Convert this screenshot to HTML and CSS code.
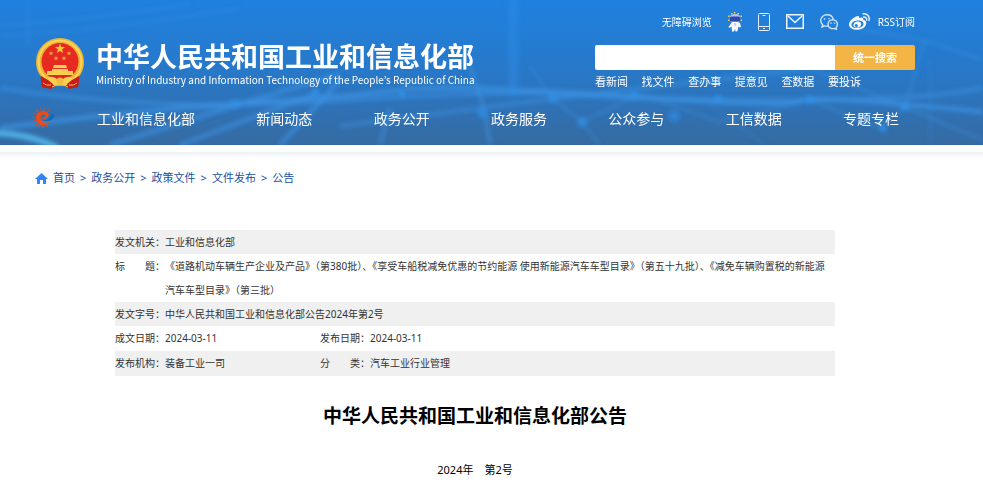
FILE: index.html
```
<!DOCTYPE html>
<html lang="zh-CN">
<head>
    <meta charset="UTF-8">
    <meta name="viewport" content="width=device-width, initial-scale=1.0">
    <title>中华人民共和国工业和信息化部公告</title>
    <link rel="stylesheet" href="styles.css">
</head>
<body>
<header class="header">
    <svg class="header-bg" viewBox="0 0 983 145" preserveAspectRatio="none" aria-hidden="true">
        <defs>
            <radialGradient id="dot">
                <stop offset="0" stop-color="#2f93ee" stop-opacity=".7"/>
                <stop offset="1" stop-color="#2f93ee" stop-opacity="0"/>
            </radialGradient>
            <filter id="soft" x="-10%" y="-50%" width="120%" height="200%"><feGaussianBlur stdDeviation="2"/></filter>
            <filter id="glow" filterUnits="userSpaceOnUse" x="480" y="-20" width="70" height="140"><feGaussianBlur stdDeviation="3"/></filter>
        </defs>
        <g fill="none" stroke="#3c93e4" filter="url(#soft)">
            <path stroke-width="5" opacity=".7" d="M0 128 Q120 112 235 104 T400 90 T620 96 T800 101 T983 112"/>
            <path stroke-width="4" opacity=".6" d="M0 88 Q150 112 330 101 T560 94 T760 100 T983 88"/>
            <path stroke-width="5" opacity=".6" d="M110 145 L240 104 L340 74 M180 145 L320 92 M280 145 L340 80"/>
            <path stroke-width="4" opacity=".5" d="M340 126 Q480 108 560 98 T800 70 M470 66 L485 112 L490 145 M380 145 L390 108"/>
            <path stroke-width="2" opacity=".5" d="M530 66 L553 98 L582 122 L600 145 M582 122 L640 94 L720 122 L810 100"/>
            <path stroke-width="2" opacity=".5" d="M810 100 L880 128 L905 107 L983 140 M905 107 L925 40 L983 60 M860 30 L925 40 M790 60 L905 107"/>
            <path stroke-width="3" opacity=".3" d="M0 26 Q90 20 190 4 M0 36 Q110 30 240 8 M28 0 V46"/>
            <path stroke-width="2" opacity=".3" d="M930 60 V145 M700 98 L765 145"/>
        </g>
        <path filter="url(#glow)" fill="none" stroke="#2f8fe8" stroke-width="9" opacity=".5" d="M513 -10 L513.500 96"/>
        <path filter="url(#soft)" fill="none" stroke="#55bdf2" stroke-width="6" opacity=".85" d="M-5 133 Q30 134 58 148"/>
        <g fill="url(#dot)">
            <circle cx="235" cy="104" r="8"/>
            <circle cx="315" cy="92" r="6"/>
            <circle cx="402" cy="94" r="6"/>
            <circle cx="482" cy="113" r="8"/>
            <circle cx="553" cy="98" r="8"/>
            <circle cx="582" cy="122" r="8"/>
            <circle cx="634" cy="95" r="7"/>
            <circle cx="674" cy="116" r="9"/>
            <circle cx="718" cy="99" r="7"/>
            <circle cx="810" cy="100" r="7"/>
            <circle cx="905" cy="107" r="7"/>
            <circle cx="883" cy="128" r="7"/>
        </g>
    </svg>

    <div class="header-main">
        <a class="brand" href="#">
            <svg class="emblem" viewBox="0 0 50 53" aria-hidden="true">
                <path fill="#cf1d1b" d="M5 35 L7 50 L16 51 L21 49 L29 49 L34 51 L43 50 L45 35Z"/>
                <circle cx="25" cy="25" r="24" fill="#eeb532"/>
                <circle cx="25" cy="25" r="21.5" fill="none" stroke="#fbd45a" stroke-width="2"/>
                <circle cx="25" cy="24.500" r="18.500" fill="#e62a22"/>
                <path fill="#f6c53a" d="M25 6.500l1.300 3.500 3.700.1-2.900 2.300 1 3.600-3.100-2.100-3.100 2.100 1-3.600-2.900-2.300 3.700-.1z"/>
                <g fill="#e9ab35">
                    <path d="M16 14l.7 1.500h1.700l-1.300 1.100.5 1.700-1.600-1-1.600 1 .5-1.700-1.300-1.100h1.700z"/>
                    <path d="M34 14l.7 1.500h1.700l-1.300 1.100.5 1.700-1.600-1-1.600 1 .5-1.700-1.300-1.100h1.700z"/>
                    <path d="M21 19l.7 1.500h1.700l-1.300 1.100.5 1.700-1.600-1-1.600 1 .5-1.700-1.300-1.100h1.700z"/>
                    <path d="M29 19l.7 1.500h1.700l-1.300 1.100.5 1.700-1.600-1-1.600 1 .5-1.700-1.300-1.100h1.700z"/>
                </g>
                <path fill="#fbcf52" d="M19 28h12l1 3h-14zM17 32h16v2h5v4H12v-4h5z"/>
                <path fill="#d92720" d="M14 39h22l-4 2H18z"/>
                <path fill="#fbcf52" d="M14 40q6-1 11 5 5-6 11-5l3 3-9 6q-5-3-10 0l-9-6z"/>
                <circle cx="25" cy="44" r="3.500" fill="#f6bd3c"/>
                <path fill="#c81c1a" d="M6 39l7 4 5 4-2 5-9-2zM44 39l-7 4-5 4 2 5 9-2z"/>
                <path fill="none" stroke="#f3c348" d="M8 46q3 3 8 2M42 46q-3 3-8 2M17 50q8-5 16 0"/>
            </svg>
            <span class="brand-text">
                <span class="brand-name">中华人民共和国工业和信息化部</span>
                <span class="brand-en" lang="en">Ministry of Industry and Information Technology of the People’s Republic of China</span>
            </span>
        </a>

        <div class="tools">
            <div class="tool-links">
                <a href="#">无障碍浏览</a>
                <a href="#" class="robot" aria-label="智能机器人">
                    <svg width="14" height="20" viewBox="0 0 14 20">
                        <ellipse cx="7" cy="6.500" rx="5.500" ry="4.500" fill="#a9c4f2"/>
                        <rect x="1.500" y="4.500" width="11" height="5" rx="2.500" fill="#3145b5"/>
                        <path fill="#e8d44e" d="M3 1h1.500v1.500H3zM6 0h1.500v1.500H6zM9.500 1H11v1.500H9.500zM0 3.500h1.500V5H0zM12.500 3.500H14V5h-1.500zM0 7.500h1.500V9H0zM12.500 7.500H14V9h-1.500zM5 2.500h1V4H5zM8.500 2.500h1V4h-1z"/>
                        <path fill="#f4f7fd" d="M4 10h6l2 1 1 4-2 .5-1-1v3l-1 2H7.500L7 17l-1 2.500H4l-.5-5-2 1.500-1-1z"/>
                        <path fill="#c5d6f2" d="M6 11h2v3H6z"/>
                    </svg>
                </a>
                <a href="#" class="phone" aria-label="手机版">
                    <svg width="12" height="18" viewBox="0 0 12 18" fill="none" stroke="#e2edf9">
                        <rect x=".5" y=".5" width="11" height="17" rx="1"/>
                        <path d="M0 13.500h12M4.500 2.500h3M5 15.500h2"/>
                    </svg>
                </a>
                <a href="#" class="mail" aria-label="邮箱">
                    <svg width="18" height="15" viewBox="0 0 18 15" fill="none" stroke="#f0f6fd" stroke-width="1.500">
                        <rect x=".75" y=".75" width="16.500" height="13.500"/>
                        <path d="M2 2l7 6.500L16 2"/>
                    </svg>
                </a>
                <a href="#" class="wechat" aria-label="微信">
                    <svg width="18" height="16" viewBox="0 0 18 16" fill="none" stroke="#cfe4f8" stroke-width="1.400">
                        <path d="M8 12q-2 .4-3.500-.2L2 13l.6-2.400Q.7 9 .7 6.500C.7 3.300 3.400.8 7 .8c3.200 0 5.700 2 6.200 4.700"/>
                        <path d="M16 13.700l.4 1.600-2-.9c-3.300.9-6.400-1-6.400-4 0-2.700 2-4.700 4.700-4.700s4.700 2 4.700 4.500c0 1.400-.5 2.600-1.400 3.500z"/>
                        <path d="M4.500 4.200v1.500M9 4v1.300M11 8.500v1.300M14.500 8.500v1.300"/>
                    </svg>
                </a>
                <a href="#" class="weibo" aria-label="微博">
                    <svg width="21" height="17" viewBox="0 0 21 17">
                        <path fill="#f3f8fe" fill-rule="evenodd" d="M7 3.500c2-1 3.500-.6 3 1.500 2.500-1 4.700-.6 4.300 1.700 2 .6 3.200 1.700 3 3.300C17 14 13 16.800 8.300 16.800 3.500 16.800 0 14.700 0 11.500c0-3 3.500-6.500 7-8zM8.500 7.500C5 7.700 2.300 9.500 2.500 12s3 3.300 6.200 3 6-2 5.800-4.300-2.800-3.400-6-3.200z"/>
                        <path fill="#f3f8fe" fill-rule="evenodd" d="M8.500 8.500c2.300-.2 4 1 3.800 2.900-.2 1.800-2 3.100-4.200 3.200-2.200 0-3.800-1-3.700-2.900.1-1.700 1.900-3.100 4.100-3.200zM7.200 11a1.500 1.500 0 1 0 .1 3 1.500 1.500 0 0 0 0-3z"/>
                        <path fill="none" stroke="#e4effb" stroke-width="1.500" d="M13.500 1q3.500-.8 5.500 1.600t.8 5.400M14 4q2-.4 3 .8t.5 2.900"/>
                    </svg>
                </a>
                <a href="#">RSS订阅</a>
            </div>
            <form class="search">
                <input type="text" class="search-input" aria-label="搜索">
                <button type="submit" class="search-button">统一搜索</button>
            </form>
            <div class="hot-links">
                <a href="#">看新闻</a>
                <a href="#">找文件</a>
                <a href="#">查办事</a>
                <a href="#">提意见</a>
                <a href="#">查数据</a>
                <a href="#">要投诉</a>
            </div>
        </div>
    </div>

    <nav class="nav">
        <svg class="nav-logo" width="22" height="20" viewBox="0 0 22 20" aria-hidden="true">
            <path fill="none" stroke="#e04a25" stroke-width="1.800" stroke-dasharray="1.500 2.300" d="M15.500 3.200A9 9 0 1 0 15.500 16.800"/>
            <path fill="#f04a16" d="M16 6.500Q14 2.500 9.500 2.800 3 3.500 2.800 10 3 16.500 9.500 17.200 14 17.200 16.500 14 11 16 8.500 13 6.500 10 8.500 7.500 11 5 12.500 7.500 12.500 9.500 8 11 13.500 12.500 16 6.500z"/>
            <path fill="#1268b8" d="M9.500 12.500Q17 12 18.500 5.500 22.500 7 20 10.500 16.500 14.500 9.500 12.500z"/>
        </svg>
        <div class="nav-links">
            <a href="#">工业和信息化部</a>
            <a href="#">新闻动态</a>
            <a href="#">政务公开</a>
            <a href="#">政务服务</a>
            <a href="#">公众参与</a>
            <a href="#">工信数据</a>
            <a href="#">专题专栏</a>
        </div>
    </nav>
</header>
<div class="header-shadow"></div>

<main class="content">
    <div class="breadcrumb">
        <svg width="13" height="11" viewBox="0 0 13 11" fill="#3385f0" aria-hidden="true">
            <path d="M6.500 0L13 6h-2v5H8V7H5v4H2V6H0z"/>
        </svg>
        <a href="#">首页</a>
        <span>&gt;</span>
        <a href="#">政务公开</a>
        <span>&gt;</span>
        <a href="#">政策文件</a>
        <span>&gt;</span>
        <a href="#">文件发布</a>
        <span>&gt;</span>
        <a href="#">公告</a>
    </div>

    <article class="article">
        <table class="info">
            <colgroup>
                <col class="col-label">
                <col class="col-date">
                <col class="col-label">
                <col>
            </colgroup>
            <tr class="shaded">
                <th scope="row">发文机关：</th>
                <td colspan="3">工业和信息化部</td>
            </tr>
            <tr>
                <th scope="row">标　　题：</th>
                <td colspan="3">《道路机动车辆生产企业及产品》（第380批）、《享受车船税减免优惠的节约能源 使用新能源汽车车型目录》（第五十九批）、《减免车辆购置税的新能源汽车车型目录》（第三批）</td>
            </tr>
            <tr class="shaded">
                <th scope="row">发文字号：</th>
                <td colspan="3">中华人民共和国工业和信息化部公告2024年第2号</td>
            </tr>
            <tr class="tall">
                <th scope="row">成文日期：</th>
                <td>2024-03-11</td>
                <th scope="row">发布日期：</th>
                <td>2024-03-11</td>
            </tr>
            <tr class="shaded tall">
                <th scope="row">发布机构：</th>
                <td>装备工业一司</td>
                <th scope="row">分　　类：</th>
                <td>汽车工业行业管理</td>
            </tr>
        </table>
        <h1>中华人民共和国工业和信息化部公告</h1>
        <p class="number">2024年　第2号</p>
    </article>
</main>
</body>
</html>
```
FILE: styles.css
```
* {
    box-sizing: border-box;
}

body {
    margin: 0;
    background-color: #fff;
    color: #333;
    font-family: "Noto Sans", "Noto Sans CJK SC", sans-serif;
    font-size: 10px;
}

a {
    color: inherit;
    text-decoration: none;
}

svg {
    display: block;
    flex: none;
}

.header {
    position: relative;
    padding: 0 68px 0 35px;
    background: linear-gradient(#1f81df, #2878c8 50%, #366ba2);
    color: #fff;
}

.header-bg {
    position: absolute;
    top: 0;
    left: 0;
    width: 100%;
    height: 100%;
}

.header-main {
    position: relative;
    display: flex;
    justify-content: space-between;
}

.brand {
    display: flex;
    gap: 11px;
    padding-top: 37px;
}

.emblem {
    width: 50px;
    height: 53px;
}

.brand-text {
    display: flex;
    flex-direction: column;
    padding-top: 5px;
    white-space: nowrap;
}

.brand-name {
    font-family: "Liberation Sans", "Noto Sans CJK SC", sans-serif;
    font-size: 27px;
    font-weight: bold;
    line-height: 32px;
}

.brand-en {
    font-family: "Noto Sans CJK KR", sans-serif;
    font-size: 10px;
    line-height: 12px;
}

.tools {
    width: 320px;
}

.tool-links {
    display: flex;
    align-items: center;
    justify-content: flex-end;
    height: 45px;
    padding-bottom: 2px;
    white-space: nowrap;
}

.robot {
    margin: 0 16px;
}

.mail {
    margin: 0 16px;
}

.weibo {
    margin: 0 8px 0 11px;
}

.search {
    display: flex;
    height: 25px;
}

.search-input {
    flex: 1;
    min-width: 0;
    padding: 0 8px;
    border: none;
    border-radius: 2px 0 0 2px;
    background-color: #fff;
    font-size: 11px;
}

.search-button {
    width: 80px;
    padding: 0 0 2px;
    border: none;
    border-radius: 0 2px 2px 0;
    background-color: #f3b545;
    color: #fff;
    font-family: inherit;
    font-size: 11px;
    font-weight: bold;
    cursor: pointer;
}

.hot-links {
    display: flex;
    justify-content: space-between;
    padding-right: 54px;
    font-size: 11px;
    line-height: 24px;
}

.nav {
    position: relative;
    display: flex;
    align-items: center;
    gap: 42px;
    height: 51px;
    padding: 0 16px 3px 0;
}

.nav-logo {
    margin-left: -2px;
}

.nav-links {
    display: flex;
    flex: 1;
    justify-content: space-between;
    font-size: 14px;
}

.header-shadow {
    height: 13px;
    margin-top: 7px;
    background: linear-gradient(#edf2f7, #fff 6px);
}

.content {
    padding: 0 68px 0 35px;
}

.breadcrumb {
    display: flex;
    align-items: center;
    gap: 5px;
    line-height: 26px;
    color: #1a50a0;
    font-size: 11px;
}

.article {
    padding: 39px 80px 0;
}

.info {
    width: 100%;
    border-collapse: collapse;
    table-layout: fixed;
    line-height: 24px;
}

.info th,
.info td {
    padding: 0;
    font-weight: normal;
    text-align: left;
    vertical-align: top;
}

.info th {
    white-space: nowrap;
}

.info td {
    padding-right: 6px;
}

.shaded {
    background-color: #f0f0f0;
}

.tall {
    line-height: 25px;
}

.col-label {
    width: 50px;
}

.col-date {
    width: 155px;
}

h1 {
    margin: 25px 0 0;
    color: #000;
    font-size: 19px;
    line-height: 30px;
    text-align: center;
}

.number {
    margin: 29px 0 0;
    color: #000;
    font-size: 11px;
    line-height: 20px;
    text-align: center;
}
```
